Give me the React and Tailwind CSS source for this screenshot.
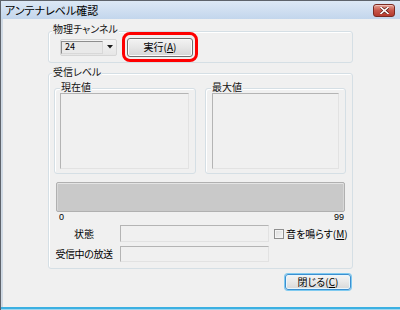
export default function App() {
  const sunken =
    "border border-t-[#b4b4b4] border-l-[#b4b4b4] border-r-[#e2e2e2] border-b-[#e2e2e2] bg-[#f0f0f0]";
  const group =
    "relative rounded-[3px] border border-[#d5dfe5] shadow-[inset_1px_1px_0_#ffffff]";
  const legend = "absolute px-[1px] bg-[#f0f0f0] leading-[12px] text-[10px] text-[#111] whitespace-nowrap";

  return (
    <div className="w-[400px] h-[310px] overflow-hidden flex flex-col bg-[#f0f0f0] border-t border-l border-[#5e636b] text-black font-['Noto_Sans_CJK_JP','Noto_Sans',sans-serif] [font-feature-settings:'palt'] text-[10px]">
      {/* title bar */}
      <div className="h-[18px] shrink-0 flex items-center justify-between pl-[4px] pr-[5px] bg-linear-to-b from-[#dde8f5] to-[#c3d6ec]">
        <span className="text-[11px] leading-[12px] text-black">アンテナレベル確認</span>
        <div className="w-[22px] h-[13px] rounded-[3px] border border-[#7a2a22] bg-linear-to-b from-[#e4a196] via-[#c8564a] to-[#b43a2e] flex items-center justify-center shadow-[inset_0_1px_0_#f0c0b8]">
          <svg width="9" height="7" viewBox="0 0 9 7">
            <path d="M1 0.5 L8 6.5 M8 0.5 L1 6.5" stroke="#5a1c16" strokeWidth="3" strokeLinecap="square" />
            <path d="M1 0.5 L8 6.5 M8 0.5 L1 6.5" stroke="#ffffff" strokeWidth="1.6" strokeLinecap="square" />
          </svg>
        </div>
      </div>

      {/* client */}
      <div className="flex-1 flex flex-col border-l-2 border-[#cfd9e4] pl-[45px]">
        {/* 物理チャンネル */}
        <div className={`${group} mt-[12px] w-[305px] h-[32px] flex items-center pl-[11px]`}>
          <span className={`${legend} left-[3px] -top-[9px]`}>物理チャンネル</span>
          <div className="w-[57px] h-[17px] rounded-[2px] border border-[#d6d6d6] bg-linear-to-b from-[#f4f4f4] to-[#e6e6e6] flex items-center">
            <div className="w-[42px] h-[13px] border border-t-[#8e8e8e] border-l-[#8e8e8e] border-r-[#d8d8d8] border-b-[#d8d8d8] bg-[#e9e9e9] flex items-center pl-[3px] text-[9px] leading-[10px]">
              24
            </div>
            <div className="flex-1 flex items-center justify-center">
              <svg width="6" height="4" viewBox="0 0 6 4">
                <path d="M0 0 H6 L3 3.5 Z" fill="#1a1a1a" />
              </svg>
            </div>
          </div>
          <div className="relative ml-[10px]">
            <button className="w-[66px] h-[19px] rounded-[3px] border border-[#707070] bg-linear-to-b from-[#f3f3f3] via-[#e6e6e6] to-[#d6d6d6] shadow-[inset_0_0_0_1px_#fbfbfb] text-[10px] leading-[12px] text-black">
              実行(<span className="underline">A</span>)
            </button>
            <div className="absolute -left-[5px] -right-[5px] -top-[6px] -bottom-[5px] rounded-[8px] border-[3px] border-[#ff0000]" />
          </div>
        </div>

        {/* 受信レベル */}
        <div className={`${group} mt-[10px] w-[305px] flex flex-col pb-[6px]`}>
          <span className={`${legend} left-[3px] -top-[8px]`}>受信レベル</span>

          <div className="mt-[14px] ml-[5px] flex gap-[9px]">
            <div className={`${group} w-[142px] h-[86px]`}>
              <span className={`${legend} left-[5px] -top-[8px]`}>現在値</span>
              <div className={`${sunken} mt-[4px] ml-[5px] w-[129px] h-[76px]`} />
            </div>
            <div className={`${group} w-[141px] h-[86px]`}>
              <span className={`${legend} left-[5px] -top-[8px]`}>最大値</span>
              <div className={`${sunken} mt-[4px] ml-[6px] w-[127px] h-[76px]`} />
            </div>
          </div>

          {/* level bar */}
          <div className="mt-[8px] ml-[7px] w-[289px] h-[30px] rounded-[2px] border border-[#b0b0b0] bg-[#c9c9c9] shadow-[inset_0_1px_0_#e4e4e4,inset_1px_0_0_#d8d8d8,inset_-1px_0_0_#d8d8d8]" />
          <div className="ml-[7px] w-[289px] flex justify-between pl-[3px] pr-[1px] text-[9px] leading-[10px] font-['Liberation_Sans',sans-serif]">
            <span>0</span>
            <span>99</span>
          </div>

          <div className="mt-[3px] ml-[6px] flex items-center">
            <span className="w-[58px] text-center leading-[12px] whitespace-nowrap">状態</span>
            <div className={`${sunken} ml-[7px] w-[149px] h-[17px]`} />
            <div className="ml-[5px] w-[10px] h-[10px] border border-[#8f8f8f] bg-linear-to-br from-[#dcdcdc] to-[#f6f6f6] shadow-[inset_0_0_0_1px_#f4f4f4]" />
            <span className="ml-[2px] leading-[12px] whitespace-nowrap">
              音を鳴らす(<span className="underline">M</span>)
            </span>
          </div>

          <div className="mt-[4px] ml-[6px] flex items-center">
            <span className="w-[58px] text-center leading-[12px] whitespace-nowrap tracking-[-0.4px]">受信中の放送</span>
            <div className={`${sunken} ml-[7px] w-[149px] h-[16px]`} />
          </div>
        </div>

        {/* close */}
        <div className="mt-[5px] w-[305px] flex justify-end pr-[2px]">
          <button className="w-[66px] h-[16px] rounded-[3px] border border-[#3c8fd0] shadow-[0_0_0_1px_#7fcaf0,inset_0_0_0_1px_#e8f6fd] bg-linear-to-b from-[#f4f4f4] via-[#e8e8e8] to-[#d8d8d8] text-[10px] leading-[12px] text-black">
            閉じる(<span className="underline">C</span>)
          </button>
        </div>
      </div>

      <div className="h-[2px] shrink-0 bg-[#3cb0e2]" />
      <div className="h-[1px] shrink-0 bg-[#9fd6ee]" />
    </div>
  );
}
